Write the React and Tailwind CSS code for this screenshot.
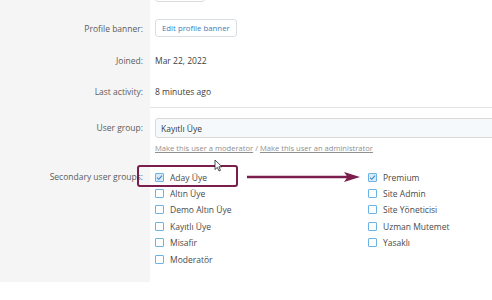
import React from "react";

const leftGroups = [
    { name: "Aday Üye", checked: true },
    { name: "Altın Üye" },
    { name: "Demo Altın Üye" },
    { name: "Kayıtlı Üye" },
    { name: "Misafir" },
    { name: "Moderatör" },
];

const rightGroups = [
    { name: "Premium", checked: true },
    { name: "Site Admin" },
    { name: "Site Yöneticisi" },
    { name: "Uzman Mutemet" },
    { name: "Yasaklı" },
];

const Box = ({ checked }) => (
    <span className={checked
        ? "block w-[9px] h-[9px] shrink-0 border border-solid border-[#6cb3e6] rounded-[1px] bg-[#d9eaf8] flex items-center justify-center"
        : "block w-[9px] h-[9px] shrink-0 border border-solid border-[#6cb3e6] rounded-[1px] bg-white"}>
        {checked && (
            <svg width="7" height="7" viewBox="0 0 7 7">
                <path d="M1 3.6 L2.8 5.3 L6 1.6" fill="none" stroke="#3d86c6" strokeWidth="1.1" />
            </svg>
        )}
    </span>
);

const GroupList = ({ items }) => (
    <div className="flex flex-col">
        {items.map((g) => (
            <label key={g.name} className="flex items-center gap-[6px] h-[16.4px] text-[#4a4a4a]">
                <Box checked={g.checked} />
                <span>{g.name}</span>
            </label>
        ))}
    </div>
);

// one label / value row, the label cell keeps the grey column going
const Row = ({ label, children, labelClass = "", rightClass = "" }) => (
    <div className="flex">
        <div className={"w-[150px] shrink-0 bg-[#f5f5f5] text-right pr-[7px] text-[#5c5c5c] " + labelClass}>{label}</div>
        <div className={"flex-1 pl-[5px] " + rightClass}>{children}</div>
    </div>
);

const App = () => {
    return (
        <div className="relative w-[492px] h-[300px] overflow-hidden bg-white font-['Open_Sans',sans-serif] text-[8.5px] leading-[15px] text-[#404040]">
            <div className="-mt-[24px]">
                {/* button of the row above, mostly out of view */}
                <Row label="" rightClass="pt-[8px] pb-[9px]">
                    <div className="w-[50px] h-[18px] border border-[#dcdcdc] rounded-[3px] bg-white"></div>
                </Row>

                <Row label="Profile banner:" labelClass="pt-[10px]" rightClass="py-[8px]">
                    <button className="h-[18px] px-[6px] border border-[#d9dee3] rounded-[3px] bg-white text-[#3d7db8] text-[7.8px] leading-[16px]">
                        Edit profile banner
                    </button>
                </Row>

                <Row label="Joined:" labelClass="py-[8px]" rightClass="py-[8px]">
                    Mar 22, 2022
                </Row>

                <Row label="Last activity:" labelClass="py-[8px]" rightClass="py-[8px]">
                    8 minutes ago
                </Row>

                <Row label="User group:" labelClass="pt-[13px]" rightClass="border-t border-[#e4e4e4] pt-[10px] pb-[6px]">
                    <div className="h-[20px] -mr-[10px] border border-[#dadada] rounded-[3px] bg-[#f6f9fc] flex items-center px-[5px] text-[#3a3a3a]">
                        Kayıtlı Üye
                    </div>
                    <div className="mt-[3px] text-[7.6px] leading-[14px] text-[#8f8f8f]">
                        <span className="underline">Make this user a moderator</span>
                        {" / "}
                        <span className="underline">Make this user an administrator</span>
                    </div>
                </Row>

                <Row label="Secondary user groups:" labelClass="pt-[8px] pb-[15px] leading-[16.4px]" rightClass="pt-[8px] pb-[15px]">
                    <div className="grid grid-cols-[213px_1fr]">
                        <GroupList items={leftGroups} />
                        <GroupList items={rightGroups} />
                    </div>
                </Row>
            </div>

            {/* highlight box and arrow drawn over the form */}
            <div className="absolute left-[137px] top-[165px] w-[101px] h-[22px] border-2 border-[#7b1d4d] rounded-[3px]"></div>
            <svg className="absolute left-[247px] top-[171px]" width="113" height="12" viewBox="0 0 113 12">
                <line x1="0" y1="6" x2="102" y2="6" stroke="#7b1d4d" strokeWidth="2.4" />
                <path d="M97 1 L113 6 L97 11 L100.5 6 Z" fill="#7b1d4d" />
            </svg>

            {/* mouse pointer */}
            <svg className="absolute left-[214px] top-[159px]" width="9" height="13" viewBox="0 0 9 13">
                <path d="M1 1 L1 10.5 L3.3 8.4 L5 12 L6.5 11.3 L4.9 7.8 L8 7.8 Z" fill="#fff" stroke="#222" strokeWidth="0.8" strokeLinejoin="round" />
            </svg>
        </div>
    );
};

export default App;
